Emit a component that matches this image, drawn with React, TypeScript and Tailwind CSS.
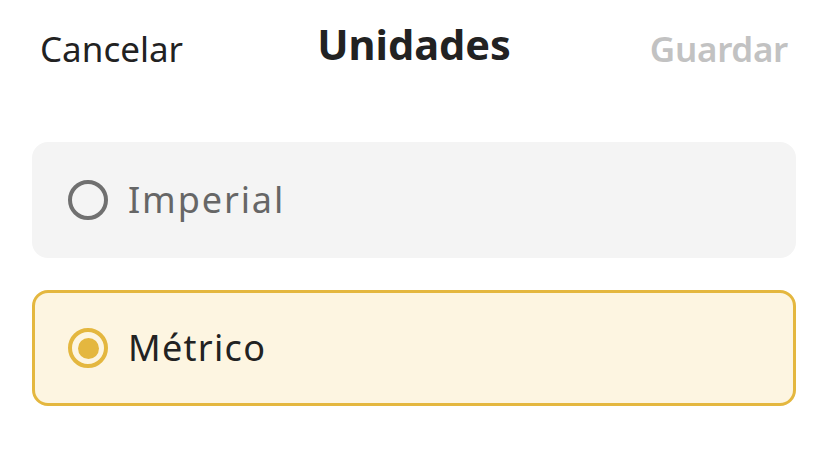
import React from "react";

export default function App() {
  const font = { fontFamily: '"Noto Sans", "Open Sans", sans-serif' };
  return (
    <div className="w-[828px] h-[471px] bg-white overflow-hidden" style={font}>
      <div className="grid grid-cols-[1fr_auto_1fr] items-center px-10 h-[96px]">
        <button className="justify-self-start text-[35px] text-[#222222] leading-none">Cancelar</button>
        <h1 className="text-[41.5px] font-bold text-[#222222] leading-none -mt-[6px]">Unidades</h1>
        <button className="justify-self-end text-[35px] font-semibold text-[#c2c2c2] leading-none tracking-[-0.3px]">Guardar</button>
      </div>
      <div className="flex flex-col gap-8 px-8 pt-[46px]">
        <div className="h-[116px] rounded-2xl bg-[#f4f4f4] flex items-center pl-9 gap-5">
          <span className="w-10 h-10 rounded-full border-4 border-[#707070]" />
          <span className="text-[36px] text-[#666666] leading-none tracking-[1.9px]">Imperial</span>
        </div>
        <div className="h-[116px] rounded-2xl bg-[#fdf5e1] border-[3px] border-[#e4b73f] flex items-center pl-[33px] gap-5">
          <span className="w-10 h-10 rounded-full border-4 border-[#e4b73f] flex items-center justify-center">
            <span className="w-[21px] h-[21px] rounded-full bg-[#e4b73f]" />
          </span>
          <span className="text-[36px] text-[#222222] leading-none tracking-[1.3px]">Métrico</span>
        </div>
      </div>
    </div>
  );
}
